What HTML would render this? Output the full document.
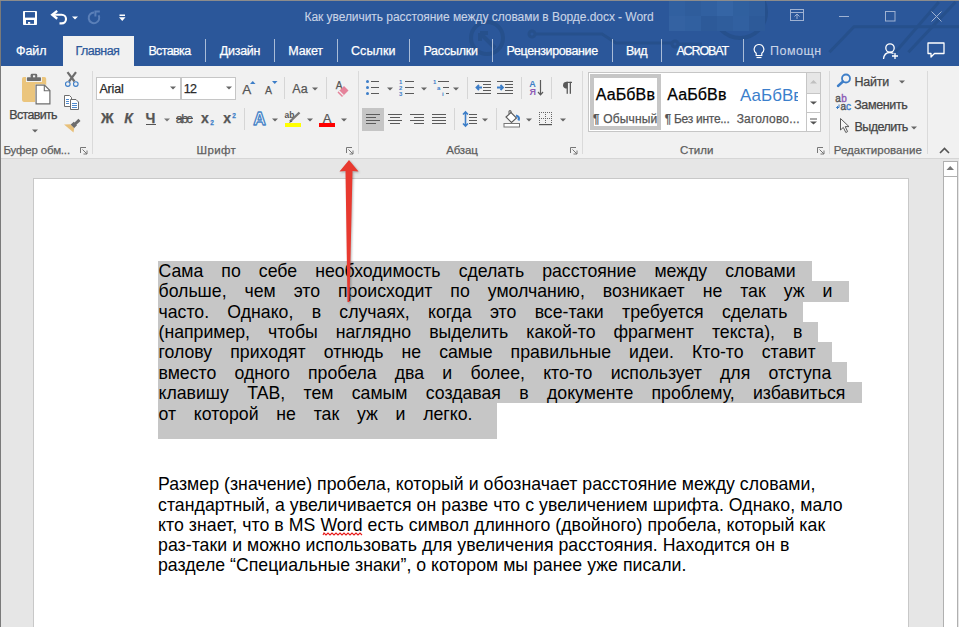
<!DOCTYPE html>
<html><head><meta charset="utf-8"><style>
html,body{margin:0;padding:0;}
body{width:959px;height:627px;overflow:hidden;position:relative;background:#E6E6E6;font-family:"Liberation Sans",sans-serif;}
.t{position:absolute;white-space:pre;-webkit-text-stroke:0.25px currentColor;}
.r{position:absolute;}
.s{position:absolute;overflow:visible;}
.jl{position:absolute;display:flex;justify-content:space-between;white-space:pre;color:#000;}
</style></head><body>
<div class="r" style="left:0px;top:0px;width:959px;height:66px;background:#2B579A;"></div>
<div class="r" style="left:0px;top:0px;width:959px;height:1px;background:#8c8c8c;"></div>
<div class="r" style="left:0px;top:0px;width:1px;height:627px;background:#7a7a7a;"></div>
<svg class="s" style="left:440px;top:1px;overflow:hidden" width="519" height="65" viewBox="0 0 519 65">
<g fill="none" stroke="#26508c" stroke-width="4">
<circle cx="47" cy="37" r="16"/>
<path d="M55 47L40 32M40 32V40M40 32H48"/>
<circle cx="300" cy="11" r="26"/>
</g>
<g fill="none" stroke="#26508c" stroke-width="3">
<circle cx="92" cy="33" r="3"/>
<path d="M95 33H162L176 42H232"/>
<circle cx="235" cy="43" r="3"/>
<path d="M238 43H262"/>
<path d="M389.4 51.2L414 25.8H520"/>
<path d="M455.4 51.2L498.8 1"/>
<path d="M468.4 51.2L515.5 1"/>
</g>
<g><rect x="229" y="0" width="16" height="15" fill="#3160a0"/><rect x="245" y="0" width="16" height="15" fill="#2f5d9c"/><rect x="261" y="0" width="16" height="15" fill="#3160a0"/><rect x="277" y="0" width="16" height="15" fill="#3565a5"/><rect x="293" y="0" width="16" height="15" fill="#30609f"/><rect x="309" y="0" width="16" height="15" fill="#2f5d9c"/><rect x="229" y="15" width="16" height="15" fill="#3462a2"/><rect x="245" y="15" width="16" height="15" fill="#3160a0"/><rect x="261" y="15" width="16" height="15" fill="#2d5a99"/><rect x="277" y="15" width="16" height="15" fill="#2f5d9c"/><rect x="293" y="15" width="16" height="15" fill="#3160a0"/><rect x="309" y="15" width="16" height="15" fill="#2d5a99"/></g>
</svg>
<div class="r" style="left:0px;top:0px;width:959px;height:1px;background:#8c8c8c;"></div>
<svg class="s" style="left:23px;top:11px;" width="14" height="14" viewBox="0 0 14 14"><rect x="0" y="0" width="14" height="14" rx="0.8" fill="#fff"/><rect x="2" y="1.1" width="10" height="5.5" fill="#2B579A"/><rect x="3" y="9" width="8" height="3.8" fill="#2B579A"/><rect x="5" y="11" width="2.2" height="1.8" fill="#fff"/></svg>
<svg class="s" style="left:46px;top:6px;" width="26" height="22" viewBox="0 0 26 22"><path d="M11.2 4.9L6.3 8.8L11.2 12.7" fill="none" stroke="#fff" stroke-width="2.4" stroke-linejoin="miter"/><path d="M7 8.8H15.7A4.3 4.3 0 0 1 15.7 17.4H13.5" fill="none" stroke="#fff" stroke-width="2.1"/></svg>
<svg class="s" style="left:71.5px;top:16px;" width="6" height="4" viewBox="0 0 6 4"><path d="M0 0.5H6L3 3.5Z" fill="#fff"/></svg>
<svg class="s" style="left:80px;top:6px;" width="26" height="22" viewBox="0 0 26 22"><path d="M14 6.6A5.3 5.3 0 1 0 18.6 9.3" fill="none" stroke="#5a7fb8" stroke-width="2"/><path d="M15.4 10.6V5.6H19.8" fill="none" stroke="#5a7fb8" stroke-width="2"/></svg>
<svg class="s" style="left:118px;top:13px;" width="9" height="9" viewBox="0 0 9 9"><rect x="1.5" y="1.5" width="5.5" height="1.5" fill="#fff"/><path d="M1 4.2H7.5L4.25 8Z" fill="#fff"/></svg>
<span class="t" style="left:304.50px;top:11.00px;font-size:12px;line-height:12px;color:#C9D4E6;letter-spacing:-0.053px;-webkit-text-stroke:0.1px currentColor;">Как увеличить расстояние между словами в Ворде.docx - Word</span>
<svg class="s" style="left:790px;top:9px;" width="16" height="14" viewBox="0 0 16 14"><rect x="0.5" y="0.5" width="13" height="11" fill="none" stroke="#9fb2d2"/><path d="M0.5 3.5H13.5" stroke="#9fb2d2"/><path d="M7 10V5M4.5 7.5L7 5L9.5 7.5" fill="none" stroke="#9fb2d2"/></svg>
<div class="r" style="left:839px;top:16px;width:10px;height:1px;background:#9fb2d2;"></div>
<svg class="s" style="left:885px;top:11px;" width="11" height="11" viewBox="0 0 11 11"><rect x="0.5" y="0.5" width="9.5" height="9.5" fill="none" stroke="#9fb2d2"/></svg>
<svg class="s" style="left:931px;top:11px;" width="11" height="11" viewBox="0 0 11 11"><path d="M0.5 0.5L10.5 10.5M10.5 0.5L0.5 10.5" stroke="#9fb2d2" stroke-width="1"/></svg>
<div class="r" style="left:63px;top:36px;width:71px;height:30px;background:#F1F1F1;"></div>
<span class="t" style="left:16.00px;top:45.00px;font-size:12.5px;line-height:12.5px;color:#ffffff;letter-spacing:-0.067px;">Файл</span>
<span class="t" style="left:75.60px;top:45.00px;font-size:12.5px;line-height:12.5px;color:#2B579A;letter-spacing:-0.550px;">Главная</span>
<span class="t" style="left:148.40px;top:45.00px;font-size:12.5px;line-height:12.5px;color:#ffffff;letter-spacing:-0.617px;">Вставка</span>
<span class="t" style="left:219.70px;top:45.00px;font-size:12.5px;line-height:12.5px;color:#ffffff;letter-spacing:-0.240px;">Дизайн</span>
<span class="t" style="left:288.30px;top:45.00px;font-size:12.5px;line-height:12.5px;color:#ffffff;letter-spacing:-0.175px;">Макет</span>
<span class="t" style="left:351.00px;top:45.00px;font-size:12.5px;line-height:12.5px;color:#ffffff;letter-spacing:0.080px;">Ссылки</span>
<span class="t" style="left:423.40px;top:45.00px;font-size:12.5px;line-height:12.5px;color:#ffffff;letter-spacing:-0.200px;">Рассылки</span>
<span class="t" style="left:506.50px;top:45.00px;font-size:12.5px;line-height:12.5px;color:#ffffff;letter-spacing:-0.377px;">Рецензирование</span>
<span class="t" style="left:626.00px;top:45.00px;font-size:12.5px;line-height:12.5px;color:#ffffff;letter-spacing:-0.550px;">Вид</span>
<span class="t" style="left:676.40px;top:45.00px;font-size:12.5px;line-height:12.5px;color:#ffffff;letter-spacing:-1.117px;">ACROBAT</span>
<div class="r" style="left:205px;top:39px;width:1px;height:23px;background:#a9bcd8;"></div>
<div class="r" style="left:274px;top:39px;width:1px;height:23px;background:#a9bcd8;"></div>
<div class="r" style="left:337px;top:39px;width:1px;height:23px;background:#a9bcd8;"></div>
<div class="r" style="left:409px;top:39px;width:1px;height:23px;background:#a9bcd8;"></div>
<div class="r" style="left:492px;top:39px;width:1px;height:23px;background:#a9bcd8;"></div>
<div class="r" style="left:612px;top:39px;width:1px;height:23px;background:#a9bcd8;"></div>
<div class="r" style="left:661px;top:39px;width:1px;height:23px;background:#a9bcd8;"></div>
<div class="r" style="left:743px;top:39px;width:1px;height:23px;background:#a9bcd8;"></div>
<svg class="s" style="left:752px;top:43px;" width="14" height="18" viewBox="0 0 14 18"><path d="M7 1.5A4.8 4.8 0 0 0 4.2 10.2V12.5H9.8V10.2A4.8 4.8 0 0 0 7 1.5Z" fill="none" stroke="#fff" stroke-width="1.2"/><path d="M4.5 14.5H9.5" stroke="#fff" stroke-width="1.2"/></svg>
<span class="t" style="left:770.00px;top:45.00px;font-size:12.5px;line-height:12.5px;color:#c9d4e7;letter-spacing:0.500px;-webkit-text-stroke:0.1px currentColor;">Помощн</span>
<svg class="s" style="left:882px;top:42px;" width="18" height="18" viewBox="0 0 18 18"><circle cx="8" cy="6" r="4.2" fill="none" stroke="#fff" stroke-width="1.3"/><path d="M1.5 17C2 12 4.5 10.5 8 10.5C9.5 10.5 10.5 11 11.5 11.5" fill="none" stroke="#fff" stroke-width="1.3"/><path d="M13 11V17M10 14H16" stroke="#fff" stroke-width="1.3"/></svg>
<svg class="s" style="left:927px;top:42px;" width="18" height="16" viewBox="0 0 18 16"><path d="M1 1H17V11.5H7.5L4 15V11.5H1Z" fill="none" stroke="#fff" stroke-width="1.3" stroke-linejoin="round"/></svg>
<div class="r" style="left:1px;top:66px;width:958px;height:92px;background:#F1F1F1;"></div>
<div class="r" style="left:1px;top:158px;width:958px;height:1px;background:#d6d6d6;"></div>
<div class="r" style="left:92px;top:71px;width:1px;height:83px;background:#dadada;"></div>
<div class="r" style="left:358px;top:71px;width:1px;height:83px;background:#dadada;"></div>
<div class="r" style="left:582px;top:71px;width:1px;height:83px;background:#dadada;"></div>
<div class="r" style="left:829px;top:71px;width:1px;height:83px;background:#dadada;"></div>
<div class="r" style="left:927px;top:71px;width:1px;height:83px;background:#dadada;"></div>
<span class="t" style="left:3.50px;top:145.00px;font-size:11.5px;line-height:11.5px;color:#5e5e5e;letter-spacing:-0.182px;">Буфер обм...</span>
<span class="t" style="left:196.50px;top:145.00px;font-size:11.5px;line-height:11.5px;color:#5e5e5e;letter-spacing:0.375px;">Шрифт</span>
<span class="t" style="left:446.20px;top:145.00px;font-size:11.5px;line-height:11.5px;color:#5e5e5e;letter-spacing:-0.175px;">Абзац</span>
<span class="t" style="left:680.10px;top:145.00px;font-size:11.5px;line-height:11.5px;color:#5e5e5e;letter-spacing:0.075px;">Стили</span>
<span class="t" style="left:833.70px;top:145.00px;font-size:11.5px;line-height:11.5px;color:#5e5e5e;letter-spacing:0.038px;">Редактирование</span>
<svg class="s" style="left:80px;top:147px;" width="8" height="8" viewBox="0 0 8 8"><path d="M0.5 6V0.5H6" fill="none" stroke="#777"/><path d="M2.5 2.5L7 7M7 3.5V7H3.5" fill="none" stroke="#777"/></svg>
<svg class="s" style="left:346px;top:147px;" width="8" height="8" viewBox="0 0 8 8"><path d="M0.5 6V0.5H6" fill="none" stroke="#777"/><path d="M2.5 2.5L7 7M7 3.5V7H3.5" fill="none" stroke="#777"/></svg>
<svg class="s" style="left:570px;top:147px;" width="8" height="8" viewBox="0 0 8 8"><path d="M0.5 6V0.5H6" fill="none" stroke="#777"/><path d="M2.5 2.5L7 7M7 3.5V7H3.5" fill="none" stroke="#777"/></svg>
<svg class="s" style="left:817px;top:147px;" width="8" height="8" viewBox="0 0 8 8"><path d="M0.5 6V0.5H6" fill="none" stroke="#777"/><path d="M2.5 2.5L7 7M7 3.5V7H3.5" fill="none" stroke="#777"/></svg>
<svg class="s" style="left:939px;top:147px;" width="11" height="7" viewBox="0 0 11 7"><path d="M1 6L5.5 1.5L10 6" fill="none" stroke="#555" stroke-width="1.6"/></svg>
<svg class="s" style="left:20px;top:72px;" width="32" height="34" viewBox="0 0 32 34">
<rect x="2" y="4.9" width="24.2" height="25" rx="1.8" fill="#EBC57D"/>
<rect x="6" y="4.2" width="16" height="5.8" fill="#F1F1F1"/>
<rect x="6.9" y="5.2" width="14.1" height="3.8" rx="0.8" fill="#6d6d6d"/>
<rect x="10.6" y="1.8" width="6.6" height="4.6" rx="1.4" fill="#6d6d6d"/>
<rect x="13" y="3.3" width="2.2" height="2" fill="#F1F1F1"/>
<path d="M15.1 12.2H25L30.9 18.1V32.9H15.1Z" fill="#F1F1F1"/>
<path d="M16.1 13.2H24.5L29.9 18.6V31.9H16.1Z" fill="#fff" stroke="#6d6d6d" stroke-width="1.2"/>
<path d="M24.3 13.2V18.8H29.9" fill="none" stroke="#6d6d6d" stroke-width="1.1"/>
</svg>
<span class="t" style="left:9.30px;top:108.50px;font-size:12.5px;line-height:12.5px;color:#444444;letter-spacing:-0.671px;">Вставить</span>
<svg class="s" style="left:31.5px;top:129px;" width="6" height="4" viewBox="0 0 6 4"><path d="M0 0.5H6L3 3.5Z" fill="#666"/></svg>
<svg class="s" style="left:63px;top:71px;" width="18" height="16" viewBox="0 0 18 16"><path d="M4.5 1.2L11.5 10.5M13 1.2L6 10.5" stroke="#6d6d6d" stroke-width="2.2"/><circle cx="4.8" cy="13.1" r="2.3" fill="#F1F1F1" stroke="#3d7ec8" stroke-width="1.1"/><circle cx="12.8" cy="13.1" r="2.3" fill="#F1F1F1" stroke="#3d7ec8" stroke-width="1.1"/></svg>
<svg class="s" style="left:63px;top:95px;" width="17" height="16" viewBox="0 0 17 16"><path d="M1.5 0.5H6.5L8.5 2.5V11.5H1.5Z" fill="#fff" stroke="#6d6d6d"/><path d="M3 4.5H6M3 6.5H6M3 8.5H6" stroke="#3d7ec8" stroke-width="0.9"/><path d="M7.5 4.5H13L15.5 7V14.5H7.5Z" fill="#fff" stroke="#6d6d6d"/><path d="M9 8.5H14M9 10.5H14M9 12.5H14" stroke="#3d7ec8" stroke-width="0.9"/></svg>
<svg class="s" style="left:63px;top:118px;" width="18" height="16" viewBox="0 0 18 16"><path d="M11.5 6.5L16.5 1.8" stroke="#6d6d6d" stroke-width="3"/><path d="M7.5 6.8L10.8 3.8L14 7.2L11 10.2Z" fill="#6d6d6d"/><path d="M1 6.5L7.2 6.2L11.2 10.3L10.5 14.5Z" fill="#E8C07A"/></svg>
<div class="r" style="left:96px;top:77px;width:85px;height:23px;background:#fff;box-shadow: inset 0 0 0 1px #c6c6c6;"></div>
<div class="r" style="left:181px;top:77px;width:55px;height:23px;background:#fff;box-shadow: inset 0 0 0 1px #c6c6c6;"></div>
<span class="t" style="left:99.40px;top:83.00px;font-size:12.5px;line-height:12.5px;color:#2b2b2b;letter-spacing:-0.150px;">Arial</span>
<span class="t" style="left:183.80px;top:83.00px;font-size:12.5px;line-height:12.5px;color:#2b2b2b;letter-spacing:-0.800px;">12</span>
<svg class="s" style="left:170px;top:86.3px;" width="6" height="4" viewBox="0 0 6 4"><path d="M0 0.5H6L3 3.5Z" fill="#666"/></svg>
<svg class="s" style="left:225.5px;top:86.3px;" width="6" height="4" viewBox="0 0 6 4"><path d="M0 0.5H6L3 3.5Z" fill="#666"/></svg>
<span class="t" style="left:242.30px;top:83.00px;font-size:13.5px;line-height:13.5px;color:#555;">A</span>
<svg class="s" style="left:250px;top:81px;" width="6" height="4" viewBox="0 0 6 4"><path d="M0 3H5.5L2.75 0Z" fill="#3d7ec8"/></svg>
<span class="t" style="left:265.10px;top:85.00px;font-size:10.5px;line-height:10.5px;color:#555;">A</span>
<svg class="s" style="left:272px;top:81px;" width="6" height="4" viewBox="0 0 6 4"><path d="M0 0H5.5L2.75 3Z" fill="#3d7ec8"/></svg>
<div class="r" style="left:284px;top:77px;width:1px;height:22px;background:#d6d6d6;"></div>
<span class="t" style="left:292.30px;top:82.50px;font-size:12.5px;line-height:12.5px;color:#555;">Aa</span>
<svg class="s" style="left:311.5px;top:86.5px;" width="6" height="4" viewBox="0 0 6 4"><path d="M0 0.5H6L3 3.5Z" fill="#666"/></svg>
<div class="r" style="left:326px;top:77px;width:1px;height:22px;background:#d6d6d6;"></div>
<span class="t" style="left:335.70px;top:81.00px;font-size:10px;line-height:10px;color:#555;">A</span>
<svg class="s" style="left:336px;top:82px;" width="15" height="15" viewBox="0 0 15 15"><path d="M1.5 10.5L8 4L12.5 8.5L6 15Z" fill="#E5829A"/><path d="M1.5 10.5L6 15" stroke="#f1f1f1" stroke-width="0"/><path d="M3 9L7.5 13.5" stroke="#f1f1f1" stroke-width="1.2"/></svg>
<span class="t" style="left:100.90px;top:111.00px;font-size:14px;line-height:14px;color:#555;font-weight:700;">Ж</span>
<span class="t" style="left:124.20px;top:111.00px;font-size:14px;line-height:14px;color:#555;font-weight:700;font-style:italic;">К</span>
<span class="t" style="left:145.50px;top:111.00px;font-size:14px;line-height:14px;color:#555;font-weight:700;">Ч</span>
<div class="r" style="left:146px;top:124px;width:10px;height:1.3px;background:#555;"></div>
<svg class="s" style="left:164px;top:118px;" width="6" height="4" viewBox="0 0 6 4"><path d="M0 0.5H6L3 3.5Z" fill="#777"/></svg>
<span class="t" style="left:175.70px;top:113.00px;font-size:12.5px;line-height:12.5px;color:#555;letter-spacing:-1.500px;">abc</span>
<div class="r" style="left:176px;top:118px;width:17px;height:1.2px;background:#555;"></div>
<span class="t" style="left:201.00px;top:111.00px;font-size:14px;line-height:14px;color:#555;font-weight:700;">x</span>
<span class="t" style="left:210.20px;top:120.00px;font-size:6.5px;line-height:6.5px;color:#3d7ec8;font-weight:700;">2</span>
<span class="t" style="left:223.20px;top:111.00px;font-size:14px;line-height:14px;color:#555;font-weight:700;">x</span>
<span class="t" style="left:232.30px;top:112.50px;font-size:6.5px;line-height:6.5px;color:#3d7ec8;font-weight:700;">2</span>
<div class="r" style="left:244px;top:108px;width:1px;height:22px;background:#d6d6d6;"></div>
<svg class="s" style="left:252px;top:110px;" width="16" height="17" viewBox="0 0 16 17"><text x="1.2" y="14.5" font-family="Liberation Sans" font-size="17.5" font-weight="700" fill="#fdfdfd" stroke="#4a86c8" stroke-width="1.3" stroke-linejoin="round">A</text></svg>
<svg class="s" style="left:271.5px;top:118px;" width="6" height="4" viewBox="0 0 6 4"><path d="M0 0.5H6L3 3.5Z" fill="#666"/></svg>
<svg class="s" style="left:284px;top:111px;" width="18" height="16" viewBox="0 0 18 16"><text x="0.5" y="6.8" font-family="Liberation Sans" font-size="8.5" font-weight="700" fill="#555">ab</text><path d="M6 10.5L15.5 1.5" stroke="#777" stroke-width="2.4"/><path d="M5 12L6.5 9.5L8.5 10.5Z" fill="#555"/><rect x="1" y="12" width="16" height="4" fill="#FFFF00"/></svg>
<svg class="s" style="left:306.5px;top:118px;" width="6" height="4" viewBox="0 0 6 4"><path d="M0 0.5H6L3 3.5Z" fill="#666"/></svg>
<span class="t" style="left:322.80px;top:112.00px;font-size:13px;line-height:13px;color:#555;">A</span>
<div class="r" style="left:319px;top:123px;width:16px;height:4px;background:#FF0000;"></div>
<svg class="s" style="left:340.5px;top:118px;" width="6" height="4" viewBox="0 0 6 4"><path d="M0 0.5H6L3 3.5Z" fill="#666"/></svg>
<svg class="s" style="left:365px;top:79px;" width="15" height="17" viewBox="0 0 15 17"><circle cx="2.5" cy="2.5" r="1.5" fill="#3d7ec8"/><path d="M6 2.5H14" stroke="#5a5a5a" stroke-width="1"/><circle cx="2.5" cy="8.5" r="1.5" fill="#3d7ec8"/><path d="M6 8.5H14" stroke="#5a5a5a" stroke-width="1"/><circle cx="2.5" cy="14.5" r="1.5" fill="#3d7ec8"/><path d="M6 14.5H14" stroke="#5a5a5a" stroke-width="1"/></svg>
<svg class="s" style="left:386.5px;top:86.5px;" width="6" height="4" viewBox="0 0 6 4"><path d="M0 0.5H6L3 3.5Z" fill="#666"/></svg>
<svg class="s" style="left:399px;top:79px;" width="16" height="17" viewBox="0 0 16 17"><text x="0" y="4.8" font-family="Liberation Sans" font-size="6" font-weight="700" fill="#3d7ec8">1</text><path d="M6 2.5H15" stroke="#5a5a5a" stroke-width="1"/><text x="0" y="10.8" font-family="Liberation Sans" font-size="6" font-weight="700" fill="#3d7ec8">2</text><path d="M6 8.5H15" stroke="#5a5a5a" stroke-width="1"/><text x="0" y="16.8" font-family="Liberation Sans" font-size="6" font-weight="700" fill="#3d7ec8">3</text><path d="M6 14.5H15" stroke="#5a5a5a" stroke-width="1"/></svg>
<svg class="s" style="left:420.5px;top:86.5px;" width="6" height="4" viewBox="0 0 6 4"><path d="M0 0.5H6L3 3.5Z" fill="#666"/></svg>
<svg class="s" style="left:433px;top:79px;" width="17" height="18" viewBox="0 0 17 18"><text x="0" y="4.8" font-family="Liberation Sans" font-size="6" font-weight="700" fill="#3d7ec8">1</text><path d="M5 2.5H16" stroke="#5a5a5a" stroke-width="1"/><text x="4" y="10.8" font-family="Liberation Sans" font-size="6" font-weight="700" fill="#3d7ec8">a</text><path d="M10 8.5H16" stroke="#5a5a5a" stroke-width="1"/><text x="9" y="16.8" font-family="Liberation Sans" font-size="6" font-weight="700" fill="#3d7ec8">i</text><path d="M13 14.5H16" stroke="#5a5a5a" stroke-width="1"/></svg>
<svg class="s" style="left:452.5px;top:86.5px;" width="6" height="4" viewBox="0 0 6 4"><path d="M0 0.5H6L3 3.5Z" fill="#666"/></svg>
<div class="r" style="left:467px;top:77px;width:1px;height:22px;background:#d6d6d6;"></div>
<svg class="s" style="left:475px;top:81px;" width="17" height="14" viewBox="0 0 17 14"><path d="M0 0.5H16" stroke="#5a5a5a" stroke-width="1"/><path d="M8 3.5H16" stroke="#5a5a5a" stroke-width="1"/><path d="M8 6.5H16" stroke="#5a5a5a" stroke-width="1"/><path d="M8 9.5H16" stroke="#5a5a5a" stroke-width="1"/><path d="M0 12.5H16" stroke="#5a5a5a" stroke-width="1"/><path d="M1.5 6.5H7M4 4L1.5 6.5L4 9" fill="none" stroke="#3d7ec8" stroke-width="1.8"/></svg>
<svg class="s" style="left:497px;top:81px;" width="17" height="14" viewBox="0 0 17 14"><path d="M0 0.5H16" stroke="#5a5a5a" stroke-width="1"/><path d="M8 3.5H16" stroke="#5a5a5a" stroke-width="1"/><path d="M8 6.5H16" stroke="#5a5a5a" stroke-width="1"/><path d="M8 9.5H16" stroke="#5a5a5a" stroke-width="1"/><path d="M0 12.5H16" stroke="#5a5a5a" stroke-width="1"/><path d="M0 6.5H6M3.5 4L6 6.5L3.5 9" fill="none" stroke="#3d7ec8" stroke-width="1.8"/></svg>
<div class="r" style="left:521px;top:77px;width:1px;height:22px;background:#d6d6d6;"></div>
<svg class="s" style="left:528px;top:79px;" width="17" height="17" viewBox="0 0 17 17"><text x="1.3" y="7.8" font-family="Liberation Sans" font-size="9" font-weight="700" fill="#3d7ec8">A</text><text x="1.6" y="16" font-family="Liberation Sans" font-size="9" font-weight="700" fill="#8e5bb5">Я</text><path d="M12.5 1V15.5M10 13L12.5 15.8L15 13" fill="none" stroke="#5a5a5a" stroke-width="1.2"/></svg>
<div class="r" style="left:551px;top:77px;width:1px;height:22px;background:#d6d6d6;"></div>
<svg class="s" style="left:561px;top:80px;" width="12" height="15" viewBox="0 0 12 15"><path d="M6.4 1.8A4.4 3.4 0 0 0 6.4 8.6Z" fill="#5a5a5a"/><rect x="5.6" y="1.8" width="1.3" height="12" fill="#5a5a5a"/><rect x="8.7" y="1.8" width="1.3" height="12" fill="#5a5a5a"/><rect x="5.6" y="1.8" width="5.4" height="1.2" fill="#5a5a5a"/></svg>
<div class="r" style="left:362px;top:108px;width:22px;height:23px;background:#c5c5c5;"></div>
<svg class="s" style="left:366px;top:114px;" width="16" height="12" viewBox="0 0 16 12"><path d="M0 0.5H14" stroke="#5a5a5a" stroke-width="1"/><path d="M0 3.5H10" stroke="#5a5a5a" stroke-width="1"/><path d="M0 6.5H14" stroke="#5a5a5a" stroke-width="1"/><path d="M0 9.5H10" stroke="#5a5a5a" stroke-width="1"/></svg>
<svg class="s" style="left:388px;top:114px;" width="16" height="12" viewBox="0 0 16 12"><path d="M0 0.5H14" stroke="#5a5a5a" stroke-width="1"/><path d="M2 3.5H12" stroke="#5a5a5a" stroke-width="1"/><path d="M0 6.5H14" stroke="#5a5a5a" stroke-width="1"/><path d="M2 9.5H12" stroke="#5a5a5a" stroke-width="1"/></svg>
<svg class="s" style="left:410px;top:114px;" width="16" height="12" viewBox="0 0 16 12"><path d="M0 0.5H14" stroke="#5a5a5a" stroke-width="1"/><path d="M4 3.5H14" stroke="#5a5a5a" stroke-width="1"/><path d="M0 6.5H14" stroke="#5a5a5a" stroke-width="1"/><path d="M4 9.5H14" stroke="#5a5a5a" stroke-width="1"/></svg>
<svg class="s" style="left:432px;top:114px;" width="16" height="12" viewBox="0 0 16 12"><path d="M0 0.5H14" stroke="#5a5a5a" stroke-width="1"/><path d="M0 3.5H14" stroke="#5a5a5a" stroke-width="1"/><path d="M0 6.5H14" stroke="#5a5a5a" stroke-width="1"/><path d="M0 9.5H14" stroke="#5a5a5a" stroke-width="1"/></svg>
<div class="r" style="left:454px;top:108px;width:1px;height:22px;background:#d6d6d6;"></div>
<svg class="s" style="left:462px;top:110px;" width="16" height="18" viewBox="0 0 16 18"><path d="M3.5 2V16M1 4.5L3.5 2L6 4.5M1 13.5L3.5 16L6 13.5" fill="none" stroke="#3d7ec8" stroke-width="1.6"/><path d="M7 4.5H15" stroke="#5a5a5a" stroke-width="1"/><path d="M7 7.5H15" stroke="#5a5a5a" stroke-width="1"/><path d="M7 10.5H15" stroke="#5a5a5a" stroke-width="1"/><path d="M7 13.5H15" stroke="#5a5a5a" stroke-width="1"/></svg>
<svg class="s" style="left:481.5px;top:118px;" width="6" height="4" viewBox="0 0 6 4"><path d="M0 0.5H6L3 3.5Z" fill="#666"/></svg>
<div class="r" style="left:496px;top:108px;width:1px;height:22px;background:#d6d6d6;"></div>
<svg class="s" style="left:503px;top:110px;" width="18" height="18" viewBox="0 0 18 18"><path d="M3 7L8 2.5L13.5 8L8.5 12.5Z" fill="#fff" stroke="#5a5a5a" stroke-width="1.1"/><path d="M6 4V0.8H8V3" fill="none" stroke="#5a5a5a" stroke-width="1"/><path d="M13 5.5Q17 6.5 15.5 10.5" fill="none" stroke="#3d7ec8" stroke-width="2.2"/><rect x="1" y="13.5" width="15.5" height="3.5" fill="#fff" stroke="#777"/></svg>
<svg class="s" style="left:525.5px;top:118px;" width="6" height="4" viewBox="0 0 6 4"><path d="M0 0.5H6L3 3.5Z" fill="#666"/></svg>
<svg class="s" style="left:539px;top:112px;" width="14" height="14" viewBox="0 0 14 14"><rect x="0" y="0" width="1" height="1" fill="#666"/><rect x="0" y="6" width="1" height="1" fill="#666"/><rect x="2" y="0" width="1" height="1" fill="#666"/><rect x="2" y="6" width="1" height="1" fill="#666"/><rect x="4" y="0" width="1" height="1" fill="#666"/><rect x="4" y="6" width="1" height="1" fill="#666"/><rect x="6" y="0" width="1" height="1" fill="#666"/><rect x="6" y="6" width="1" height="1" fill="#666"/><rect x="8" y="0" width="1" height="1" fill="#666"/><rect x="8" y="6" width="1" height="1" fill="#666"/><rect x="10" y="0" width="1" height="1" fill="#666"/><rect x="10" y="6" width="1" height="1" fill="#666"/><rect x="12" y="0" width="1" height="1" fill="#666"/><rect x="12" y="6" width="1" height="1" fill="#666"/><rect x="0" y="0" width="1" height="1" fill="#666"/><rect x="6" y="0" width="1" height="1" fill="#666"/><rect x="12" y="0" width="1" height="1" fill="#666"/><rect x="0" y="2" width="1" height="1" fill="#666"/><rect x="6" y="2" width="1" height="1" fill="#666"/><rect x="12" y="2" width="1" height="1" fill="#666"/><rect x="0" y="4" width="1" height="1" fill="#666"/><rect x="6" y="4" width="1" height="1" fill="#666"/><rect x="12" y="4" width="1" height="1" fill="#666"/><rect x="0" y="6" width="1" height="1" fill="#666"/><rect x="6" y="6" width="1" height="1" fill="#666"/><rect x="12" y="6" width="1" height="1" fill="#666"/><rect x="0" y="8" width="1" height="1" fill="#666"/><rect x="6" y="8" width="1" height="1" fill="#666"/><rect x="12" y="8" width="1" height="1" fill="#666"/><rect x="0" y="10" width="1" height="1" fill="#666"/><rect x="6" y="10" width="1" height="1" fill="#666"/><rect x="12" y="10" width="1" height="1" fill="#666"/><rect x="0" y="12" width="13" height="1.2" fill="#555"/></svg>
<svg class="s" style="left:559.5px;top:118px;" width="6" height="4" viewBox="0 0 6 4"><path d="M0 0.5H6L3 3.5Z" fill="#666"/></svg>
<div class="r" style="left:588px;top:72px;width:233px;height:60px;background:#fff;box-shadow: inset 0 0 0 1px #c6c6c6;"></div>
<div class="r" style="left:590px;top:74px;width:71px;height:56px;background:#fff;box-shadow: inset 0 0 0 4px #c6c6c6;"></div>
<span class="t" style="left:595.80px;top:86.60px;font-size:16px;line-height:16px;color:#000;letter-spacing:0.100px;">АаБбВв</span>
<span class="t" style="left:667.30px;top:86.60px;font-size:16px;line-height:16px;color:#000;letter-spacing:0.100px;">АаБбВв</span>
<div style="position:absolute;left:0;top:0;width:798px;height:140px;overflow:hidden"><span class="t" style="left:740.00px;top:86.50px;font-size:17px;line-height:17px;color:#3b7fcc;-webkit-text-stroke:0;">АаБбВв</span></div>
<span class="t" style="left:593.00px;top:112.50px;font-size:12px;line-height:12px;color:#555;letter-spacing:0.188px;">¶ Обычный</span>
<span class="t" style="left:664.70px;top:112.50px;font-size:12px;line-height:12px;color:#555;letter-spacing:-0.267px;">¶ Без инте...</span>
<span class="t" style="left:736.70px;top:112.50px;font-size:12px;line-height:12px;color:#555;letter-spacing:0.170px;">Заголово...</span>
<div class="r" style="left:806px;top:72px;width:1px;height:60px;background:#c6c6c6;"></div>
<div class="r" style="left:807px;top:73px;width:13px;height:20px;background:#e6e6e6;"></div>
<div class="r" style="left:806px;top:93px;width:15px;height:1px;background:#c6c6c6;"></div>
<div class="r" style="left:806px;top:112px;width:15px;height:1px;background:#c6c6c6;"></div>
<svg class="s" style="left:810px;top:80px;" width="7" height="4" viewBox="0 0 7 4"><path d="M0 3.5H7L3.5 0Z" fill="#c0c0c0"/></svg>
<svg class="s" style="left:810px;top:101px;" width="7" height="4" viewBox="0 0 7 4"><path d="M0 0.5H7L3.5 3.5Z" fill="#555"/></svg>
<svg class="s" style="left:810px;top:118px;" width="7" height="8" viewBox="0 0 7 8"><path d="M0 1H7" stroke="#555" stroke-width="1"/><path d="M0 3.5H7L3.5 6.5Z" fill="#555"/></svg>
<svg class="s" style="left:836px;top:73px;" width="16" height="14" viewBox="0 0 16 14"><circle cx="10" cy="5.5" r="4" fill="none" stroke="#3d7ec8" stroke-width="1.8"/><path d="M7 8.5L2 13" stroke="#3d7ec8" stroke-width="2.4" stroke-linecap="round"/></svg>
<span class="t" style="left:854.60px;top:75.50px;font-size:12.5px;line-height:12.5px;color:#444444;letter-spacing:-0.275px;">Найти</span>
<svg class="s" style="left:899px;top:79.5px;" width="6" height="4" viewBox="0 0 6 4"><path d="M0 0.5H6L3 3.5Z" fill="#666"/></svg>
<svg class="s" style="left:834px;top:93px;" width="20" height="18" viewBox="0 0 20 18"><g font-family="Liberation Sans" font-size="10" stroke-width="0.4"><text x="1.2" y="9" fill="#555" stroke="#555">a</text><text x="7.2" y="9" fill="#8e5bb5" stroke="#8e5bb5">b</text><text x="6.5" y="16.6" fill="#555" stroke="#555">a</text><text x="12" y="16.6" fill="#3d7ec8" stroke="#3d7ec8">c</text></g><path d="M5 11.5V14.5H2.5M4 13L2.5 14.5L4 16" stroke="#3d7ec8" stroke-width="1" fill="none"/></svg>
<span class="t" style="left:854.20px;top:98.50px;font-size:12.5px;line-height:12.5px;color:#444444;letter-spacing:-0.371px;">Заменить</span>
<svg class="s" style="left:839px;top:117px;" width="11" height="17" viewBox="0 0 11 17"><path d="M1.5 1.5V13L4.3 10.4L6.8 15.5L8.6 14.6L6.2 9.6H10Z" fill="#f6f6f6" stroke="#5a5a5a" stroke-width="1" stroke-linejoin="round"/></svg>
<span class="t" style="left:854.60px;top:121.00px;font-size:12.5px;line-height:12.5px;color:#444444;letter-spacing:-0.571px;">Выделить</span>
<svg class="s" style="left:910.5px;top:126px;" width="6" height="4" viewBox="0 0 6 4"><path d="M0 0.5H6L3 3.5Z" fill="#666"/></svg>
<div class="r" style="left:1px;top:159px;width:958px;height:468px;background:#E6E6E6;"></div>
<div class="r" style="left:34px;top:179px;width:874px;height:449px;background:#fff;box-shadow: 0 0 0 1px #c8c8c8;"></div>
<div class="r" style="left:943px;top:161px;width:15px;height:480px;background:#fff;box-shadow: inset 0 0 0 1px #b0b0b0;"></div>
<div class="r" style="left:944px;top:176px;width:13px;height:1px;background:#b0b0b0;"></div>
<svg class="s" style="left:946px;top:165px;" width="9" height="6" viewBox="0 0 9 6"><path d="M0.5 5H8L4.25 1Z" fill="#777"/></svg>
<div class="r" style="left:158px;top:261px;width:654px;height:20px;background:#C6C6C6;"></div>
<div class="r" style="left:158px;top:281px;width:691px;height:21px;background:#C6C6C6;"></div>
<div class="r" style="left:158px;top:302px;width:645px;height:20px;background:#C6C6C6;"></div>
<div class="r" style="left:158px;top:322px;width:660px;height:20px;background:#C6C6C6;"></div>
<div class="r" style="left:158px;top:342px;width:674px;height:20px;background:#C6C6C6;"></div>
<div class="r" style="left:158px;top:362px;width:689px;height:20px;background:#C6C6C6;"></div>
<div class="r" style="left:158px;top:382px;width:704px;height:21px;background:#C6C6C6;"></div>
<div class="r" style="left:158px;top:403px;width:339px;height:36px;background:#C6C6C6;"></div>
<div class="jl" style="left:158.50px;top:262.95px;width:637.10px;font-size:17.7px;line-height:17.7px;"><span>Сама</span><span>по</span><span>себе</span><span>необходимость</span><span>сделать</span><span>расстояние</span><span>между</span><span>словами</span></div>
<div class="jl" style="left:158.50px;top:283.31px;width:674.00px;font-size:17.7px;line-height:17.7px;"><span>больше,</span><span>чем</span><span>это</span><span>происходит</span><span>по</span><span>умолчанию,</span><span>возникает</span><span>не</span><span>так</span><span>уж</span><span>и</span></div>
<div class="jl" style="left:158.50px;top:303.65px;width:629.00px;font-size:17.7px;line-height:17.7px;"><span>часто.</span><span>Однако,</span><span>в</span><span>случаях,</span><span>когда</span><span>это</span><span>все-таки</span><span>требуется</span><span>сделать</span></div>
<div class="jl" style="left:158.50px;top:324.00px;width:643.80px;font-size:17.7px;line-height:17.7px;"><span>(например,</span><span>чтобы</span><span>наглядно</span><span>выделить</span><span>какой-то</span><span>фрагмент</span><span>текста),</span><span>в</span></div>
<div class="jl" style="left:158.50px;top:344.35px;width:657.20px;font-size:17.7px;line-height:17.7px;"><span>голову</span><span>приходят</span><span>отнюдь</span><span>не</span><span>самые</span><span>правильные</span><span>идеи.</span><span>Кто-то</span><span>ставит</span></div>
<div class="jl" style="left:158.50px;top:364.70px;width:672.80px;font-size:17.7px;line-height:17.7px;"><span>вместо</span><span>одного</span><span>пробела</span><span>два</span><span>и</span><span>более,</span><span>кто-то</span><span>использует</span><span>для</span><span>отступа</span></div>
<div class="jl" style="left:158.50px;top:385.06px;width:686.90px;font-size:17.7px;line-height:17.7px;"><span>клавишу</span><span>TAB,</span><span>тем</span><span>самым</span><span>создавая</span><span>в</span><span>документе</span><span>проблему,</span><span>избавиться</span></div>
<div class="jl" style="left:158.50px;top:406.01px;width:314.10px;font-size:17.7px;line-height:17.7px;"><span>от</span><span>которой</span><span>не</span><span>так</span><span>уж</span><span>и</span><span>легко.</span></div>
<span class="t" style="left:158.00px;top:476.00px;font-size:17.7px;line-height:17.7px;color:#000;letter-spacing:0.044px;-webkit-text-stroke:0;">Размер (значение) пробела, который и обозначает расстояние между словами,</span>
<span class="t" style="left:158.00px;top:496.60px;font-size:17.7px;line-height:17.7px;color:#000;letter-spacing:0.052px;-webkit-text-stroke:0;">стандартный, а увеличивается он разве что с увеличением шрифта. Однако, мало</span>
<span class="t" style="left:158.00px;top:516.80px;font-size:17.7px;line-height:17.7px;color:#000;letter-spacing:0.063px;-webkit-text-stroke:0;">кто знает, что в MS Word есть символ длинного (двойного) пробела, который как</span>
<span class="t" style="left:158.00px;top:536.80px;font-size:17.7px;line-height:17.7px;color:#000;letter-spacing:0.046px;-webkit-text-stroke:0;">раз-таки и можно использовать для увеличения расстояния. Находится он в</span>
<span class="t" style="left:158.00px;top:556.80px;font-size:17.7px;line-height:17.7px;color:#000;letter-spacing:0.024px;-webkit-text-stroke:0;">разделе “Специальные знаки”, о котором мы ранее уже писали.</span>
<svg class="s" style="left:323px;top:531.5px;" width="42" height="4" viewBox="0 0 42 4"><path d="M0 3L1 1L3 3L5 1L7 3L9 1L11 3L13 1L15 3L17 1L19 3L21 1L23 3L25 1L27 3L29 1L31 3L33 1L35 3L37 1L39 3" fill="none" stroke="#e81a1a" stroke-width="1.1"/></svg>
<svg class="s" style="left:335px;top:155px;filter:drop-shadow(1px 1px 0.8px rgba(0,0,0,0.28))" width="30" height="152" viewBox="0 0 30 152"><path d="M14 5L23.5 16.5L17.5 16L14.5 147L12.5 147L10.5 16L4.5 16.5Z" fill="#E8392F"/></svg>
</body></html>
